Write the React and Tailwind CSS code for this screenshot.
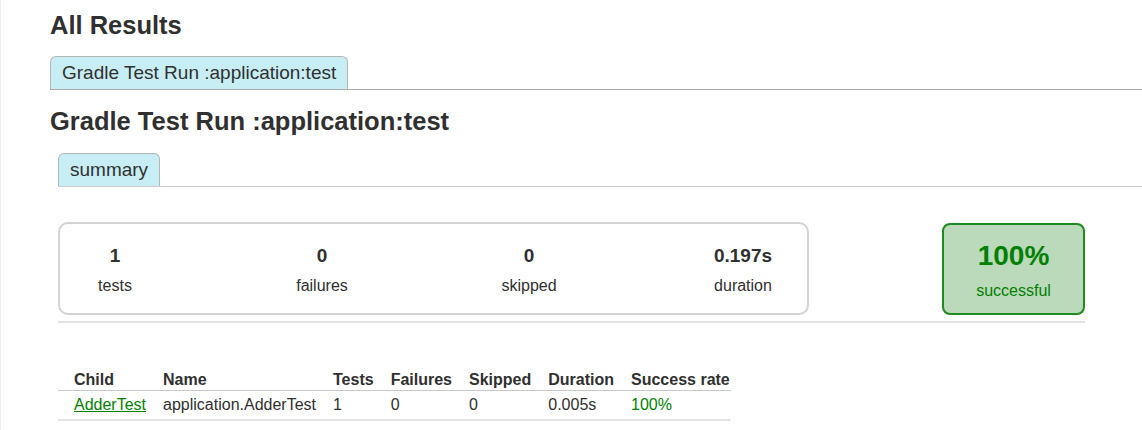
const counters = [
  { id: "tests", value: "1", label: "tests", w: "w-[110px]" },
  { id: "failures", value: "0", label: "failures", w: "w-[110px]" },
  { id: "ignored", value: "0", label: "skipped", w: "w-[110px]" },
  { id: "duration", value: "0.197s", label: "duration", w: "w-[124px]" },
];

const columns = ["Child", "Name", "Tests", "Failures", "Skipped", "Duration", "Success rate"];

const rows = [
  {
    child: "AdderTest",
    name: "application.AdderTest",
    tests: "1",
    failures: "0",
    skipped: "0",
    duration: "0.005s",
    rate: "100%",
  },
];

function Tab({ label }) {
  return (
    <div className="px-[11px] py-[5px] text-[19px] leading-[22px] bg-[#c8eef5] border border-b-0 border-[#b5b5b5] rounded-t-[6px]">
      {label}
    </div>
  );
}

export default function App() {
  return (
    <div
      className="min-h-[430px] bg-white text-[#303030] border-l border-[#eeeeee] pl-[49px] pt-[10px]"
      style={{ fontFamily: '"Liberation Sans", Arial, Helvetica, sans-serif' }}
    >
      <h1 className="text-[25.5px] leading-[30px] font-bold">All Results</h1>

      <div className="mt-[16px] flex border-b border-[#aaaaaa]">
        <Tab label="Gradle Test Run :application:test" />
      </div>

      <h2 className="mt-[16px] text-[25.5px] leading-[30px] font-bold">
        Gradle Test Run :application:test
      </h2>

      <div className="ml-[8px] mt-[17px] flex border-b border-[#cccccc]">
        <Tab label="summary" />
      </div>

      {/* summary */}
      <div className="ml-[8px] mt-[35px] w-[1027px] flex items-start justify-between pb-[6px] border-b-2 border-[#e4e4e4]">
        <div className="w-[751px] border-2 border-[#d3d3d3] rounded-[10px] flex gap-[97px] pt-[21px] pb-[18px]">
          {counters.map((c) => (
            <div key={c.id} className={`${c.w} text-center`}>
              <div className="text-[19px] leading-[22px] font-bold">{c.value}</div>
              <p className="mt-[9px] text-[16px] leading-[19px]">{c.label}</p>
            </div>
          ))}
        </div>
        <div className="mt-[1px] w-[143px] h-[92px] border-2 border-[#1f8a1f] bg-[#bbd9bb] rounded-[8px] text-center text-[#008000] pt-[15px]">
          <div className="text-[28px] leading-[32px] font-bold">100%</div>
          <p className="mt-[9px] text-[16px] leading-[19px]">successful</p>
        </div>
      </div>

      {/* children table */}
      <table className="ml-[8px] mt-[48px] border-collapse text-[16px]">
        <thead>
          <tr className="border-b border-[#c8c8c8]">
            {columns.map((col) => (
              <th key={col} className="pl-[16px] pr-[1px] pb-[1px] leading-[18px] text-left font-bold whitespace-nowrap">
                {col}
              </th>
            ))}
          </tr>
        </thead>
        <tbody>
          {rows.map((r) => (
            <tr key={r.name} className="border-b-2 border-[#e4e4e4]">
              <td className="pl-[16px] pr-[1px] py-[5px] leading-[18px]">
                <a href="#" className="text-[#008000] underline">{r.child}</a>
              </td>
              <td className="pl-[16px] pr-[1px] py-[5px] leading-[18px]">{r.name}</td>
              <td className="pl-[16px] pr-[1px] py-[5px] leading-[18px]">{r.tests}</td>
              <td className="pl-[16px] pr-[1px] py-[5px] leading-[18px]">{r.failures}</td>
              <td className="pl-[16px] pr-[1px] py-[5px] leading-[18px]">{r.skipped}</td>
              <td className="pl-[16px] pr-[1px] py-[5px] leading-[18px]">{r.duration}</td>
              <td className="pl-[16px] pr-[1px] py-[5px] leading-[18px] text-[#008000]">{r.rate}</td>
            </tr>
          ))}
        </tbody>
      </table>
    </div>
  );
}
